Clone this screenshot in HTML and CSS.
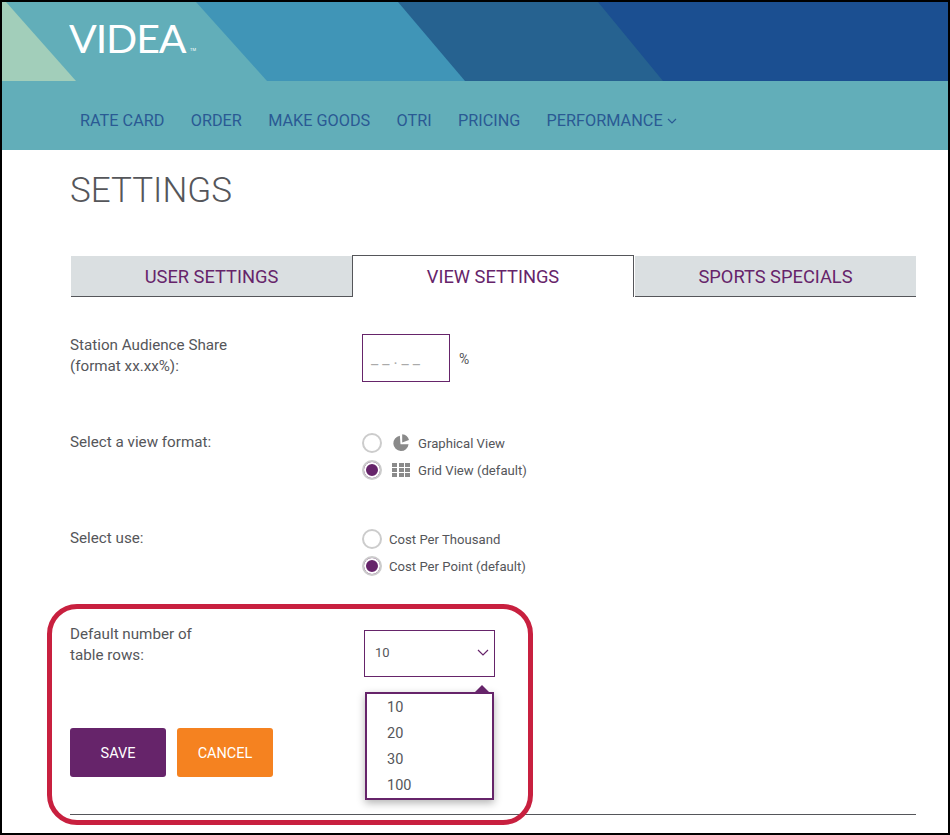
FILE: index.html
```html
<!DOCTYPE html>
<html lang="en">
<head>
    <meta charset="UTF-8">
    <meta name="viewport" content="width=device-width, initial-scale=1.0">
    <title>Settings</title>
    <link rel="stylesheet" href="styles.css">
</head>
<body>
    <div class="frame">
        <header class="banner">
            <svg class="banner-art" width="946" height="79" viewBox="0 0 946 79" aria-hidden="true">
                <rect width="946" height="79" fill="#1b4f91"/>
                <polygon points="0,0 596,0 661,79 0,79" fill="#266290"/>
                <polygon points="0,0 396,0 463,79 0,79" fill="#4095b7"/>
                <polygon points="0,0 194,0 265,79 0,79" fill="#62aeb9"/>
                <polygon points="0,0 4,0 74,79 0,79" fill="#a2ceba"/>
            </svg>
            <div class="logo">VIDEA</div>
            <span class="tm">TM</span>
        </header>
        <nav class="nav">
            <a href="#">RATE CARD</a>
            <a href="#">ORDER</a>
            <a href="#">MAKE GOODS</a>
            <a href="#">OTRI</a>
            <a href="#">PRICING</a>
            <a href="#" class="has-menu">PERFORMANCE
                <svg width="10" height="6" viewBox="0 0 10 6"><path d="M1 1l4 4 4-4" fill="none" stroke="#2a5a94" stroke-width="1.2"/></svg>
            </a>
        </nav>

        <main class="content">
            <h1>SETTINGS</h1>

            <div class="tabs">
                <div class="tab">USER SETTINGS</div>
                <div class="tab active">VIEW SETTINGS</div>
                <div class="tab last">SPORTS SPECIALS</div>
            </div>

            <div class="row row-share">
                <div class="field-label">Station Audience Share<br>(format xx.xx%):</div>
                <div class="field share">
                    <div class="share-input">_ _ . _ _</div>
                    <span class="percent">%</span>
                </div>
            </div>

            <div class="row row-format">
                <div class="field-label">Select a view format:</div>
                <div class="field options">
                    <label class="option">
                        <span class="radio"></span>
                        <svg class="opt-icon" width="17" height="18" viewBox="0.6 1 16 16.8"><path d="M8 2.6A7.2 7.2 0 1 0 16.2 10.6L8.6 10.6Z" fill="#8a8a8a"/><path d="M10.2 1.2A7.2 7.2 0 0 1 16.6 6.6L10.2 9Z" fill="#8a8a8a"/></svg>
                        Graphical View
                    </label>
                    <label class="option">
                        <span class="radio checked"></span>
                        <span class="grid-icon"><i></i><i></i><i></i><i></i><i></i><i></i><i></i><i></i><i></i></span>
                        Grid View (default)
                    </label>
                </div>
            </div>

            <div class="row row-use">
                <div class="field-label">Select use:</div>
                <div class="field options">
                    <label class="option">
                        <span class="radio"></span>
                        Cost Per Thousand
                    </label>
                    <label class="option">
                        <span class="radio checked"></span>
                        Cost Per Point (default)
                    </label>
                </div>
            </div>

            <div class="row row-rows">
                <div class="field-label">Default number of<br>table rows:</div>
                <div class="field">
                    <div class="select">
                        <span>10</span>
                        <svg width="12" height="7" viewBox="0 0 12 7"><path d="M1 1l5 5 5-5" fill="none" stroke="#66246a" stroke-width="1.2"/></svg>
                    </div>
                </div>
            </div>

            <div class="buttons">
                <button class="btn save">SAVE</button>
                <button class="btn cancel">CANCEL</button>
            </div>

            <hr class="rule">
        </main>

        <div class="menu">
            <div class="menu-item">10</div>
            <div class="menu-item">20</div>
            <div class="menu-item">30</div>
            <div class="menu-item">100</div>
        </div>
        <div class="callout"></div>
    </div>
</body>
</html>
```

FILE: styles.css
```css
html, body {
    margin: 0;
    padding: 0;
    background: #000;
}
body {
    width: 950px;
    height: 835px;
    overflow: hidden;
    font-family: Roboto, "Liberation Sans", sans-serif;
    color: #55565a;
}
.frame {
    position: relative;
    box-sizing: border-box;
    width: 946px;
    height: 831px;
    margin: 2px 2px 0;
    background: #fff;
    overflow: hidden;
}
.banner {
    position: relative;
    height: 79px;
}
.banner-art {
    display: block;
}
.logo {
    position: absolute;
    left: 67px;
    top: 17px;
    font-family: Lato, "Liberation Sans", sans-serif;
    font-size: 38px;
    line-height: 38px;
    font-weight: 400;
    letter-spacing: -1px;
    color: #fff;
    transform: scaleX(1.08);
    transform-origin: left center;
}
.tm {
    position: absolute;
    left: 188px;
    top: 46px;
    font-size: 4px;
    line-height: 4px;
    color: #fff;
}
.nav {
    display: flex;
    box-sizing: border-box;
    gap: 26.3px;
    height: 69px;
    padding: 10px 0 0 78px;
    align-items: center;
    background: #62aeb9;
}
.nav a {
    color: #2a5a94;
    font-size: 16.25px;
    text-decoration: none;
}
.has-menu svg {
    vertical-align: 2px;
}
.content {
    padding: 0 32px 0 68px;
}
h1 {
    margin: 0;
    padding-top: 21px;
    font-size: 35px;
    line-height: 39px;
    font-weight: 300;
    color: #55565a;
}
.tabs {
    display: flex;
    margin: 45px 0 0 1px;
    height: 42px;
}
.tab {
    width: 281px;
    margin-top: 1px;
    box-sizing: border-box;
    text-align: center;
    line-height: 41px;
    font-size: 18.3px;
    color: #66246a;
    background: #dadfe1;
    border-bottom: 1px solid #55565a;
}
.tab.active {
    width: 282px;
    margin-top: 0;
    background: #fff;
    border: 1px solid #55565a;
    border-bottom: 0;
}
.tab.last {
    margin-left: 1px;
}
.row {
    display: flex;
    font-size: 15.2px;
    line-height: 21px;
}
.field-label {
    width: 292px;
}
.row-share {
    margin-top: 37px;
    height: 48px;
}
.row-share .field-label,
.row-format .field-label,
.row-use .field-label {
    padding-top: 1px;
}
.share {
    display: flex;
}
.share-input {
    box-sizing: border-box;
    width: 88px;
    height: 48px;
    border: 1px solid #66246a;
    padding: 13px 0 0 8px;
    font-size: 16px;
    color: #aaa;
}
.percent {
    margin-left: 9px;
    padding-top: 15px;
    font-size: 14px;
}
.row-format {
    margin-top: 49px;
}
.row-use {
    margin-top: 47px;
}
.options {
    display: flex;
    flex-direction: column;
    gap: 7px;
    margin-top: 2px;
}
.option {
    display: flex;
    align-items: center;
    height: 20px;
    font-size: 13.15px;
}
.radio {
    box-sizing: border-box;
    width: 20px;
    height: 20px;
    margin-right: 7px;
    border: 2px solid #ccc;
    border-radius: 50%;
    background: #fff;
}
.radio.checked {
    background: #66246a;
    box-shadow: inset 0 0 0 2px #fff;
}
.opt-icon {
    margin: 0 9px 0 3px;
}
.grid-icon {
    display: grid;
    grid-template-columns: repeat(3, 5px);
    gap: 1px 1.5px;
    margin: 0 8px 0 3px;
}
.grid-icon i {
    height: 4px;
    background: #8a8a8a;
}
.row-rows {
    margin-top: 48px;
}
.select {
    box-sizing: border-box;
    display: flex;
    align-items: center;
    justify-content: space-between;
    width: 131px;
    height: 47px;
    margin: 6px 0 0 2px;
    padding: 0 5px 2px 10px;
    border: 1px solid #66246a;
    font-size: 13px;
}
.buttons {
    display: flex;
    gap: 11px;
    margin-top: 51px;
}
.btn {
    width: 96px;
    height: 49px;
    padding: 2px 0 0;
    border: 0;
    border-radius: 3px;
    font-family: inherit;
    font-size: 14.5px;
    color: #fff;
}
.save {
    background: #66246a;
}
.cancel {
    background: #f58220;
}
.rule {
    margin: 37px 0 0;
    border: 0;
    border-top: 1px solid #55565a;
}
/* dropdown list and the red annotation sit over the form */
.menu {
    position: absolute;
    left: 363px;
    top: 690px;
    box-sizing: border-box;
    width: 129px;
    height: 108px;
    padding: 1px 0 0;
    border: 2px solid #66246a;
    background: #fff;
    box-shadow: 0 3px 8px rgba(0, 0, 0, 0.3);
}
.menu::before {
    content: "";
    position: absolute;
    left: 108px;
    top: -9px;
    border: 7px solid transparent;
    border-top: 0;
    border-bottom: 7px solid #66246a;
}
.menu-item {
    padding-left: 20px;
    height: 26px;
    line-height: 26px;
    font-size: 14.5px;
    color: #55565a;
}
.callout {
    position: absolute;
    left: 45px;
    top: 602px;
    box-sizing: border-box;
    width: 486px;
    height: 221px;
    border: 5px solid #c8203f;
    border-radius: 30px;
}
```
